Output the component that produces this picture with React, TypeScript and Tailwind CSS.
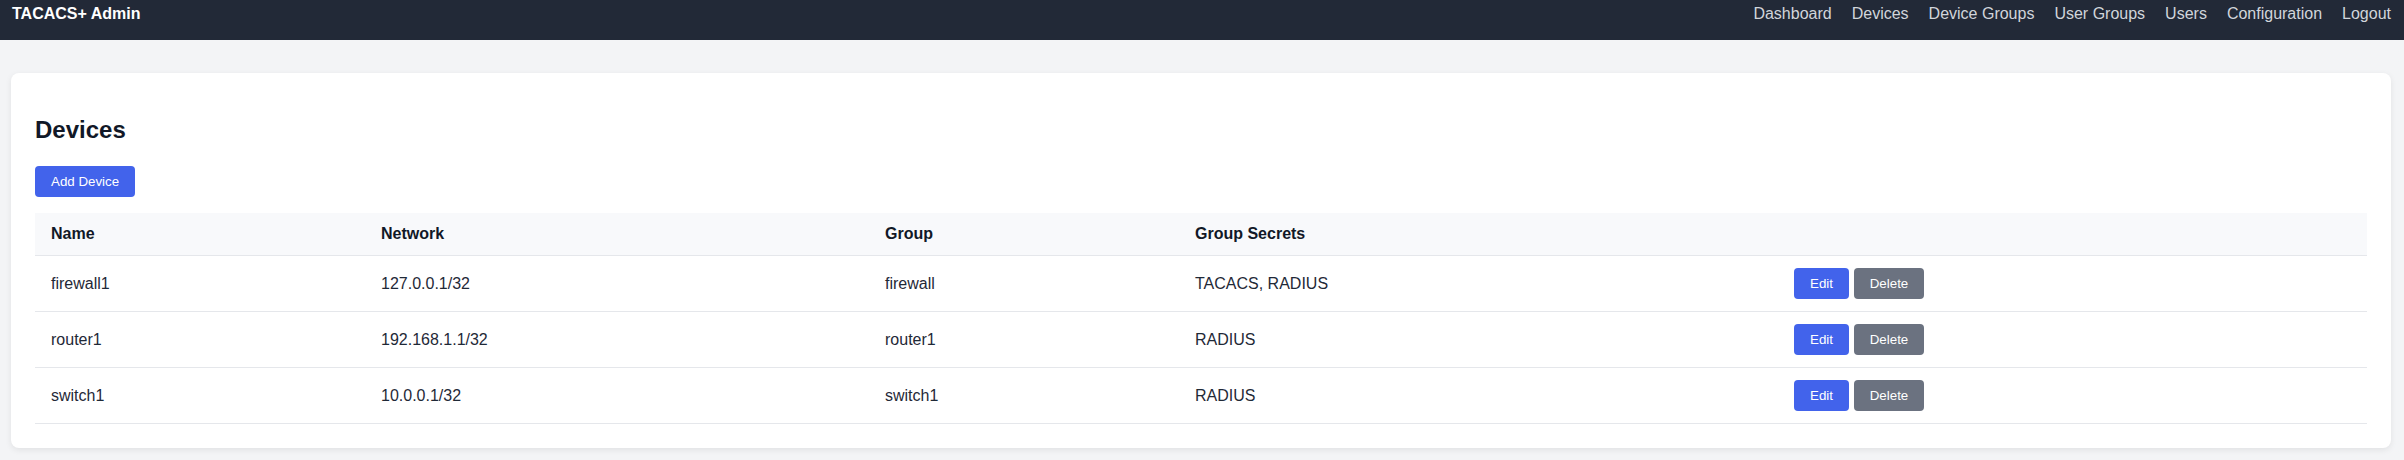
import React from "react";

const navLinks = ["Dashboard", "Devices", "Device Groups", "User Groups", "Users", "Configuration", "Logout"];

const devices = [
  { name: "firewall1", network: "127.0.0.1/32", group: "firewall", secrets: "TACACS, RADIUS" },
  { name: "router1", network: "192.168.1.1/32", group: "router1", secrets: "RADIUS" },
  { name: "switch1", network: "10.0.0.1/32", group: "switch1", secrets: "RADIUS" },
];

export default function App() {
  return (
    <div
      className="min-h-[460px] bg-[#f3f4f6] text-[#1f2937]"
      style={{ fontFamily: '"Liberation Sans", Arial, Helvetica, sans-serif' }}
    >
      <nav className="flex h-10 items-start justify-between bg-[#222937] pl-3 pr-[13px] pt-[5px] text-base leading-[18px]">
        <div className="font-bold text-white">TACACS+ Admin</div>
        <div className="flex gap-5 text-[#d1d5db]">
          {navLinks.map((l) => (
            <a key={l} href="#" className="hover:text-white">
              {l}
            </a>
          ))}
        </div>
      </nav>

      <main className="pl-[11px] pr-[13px] pt-[33px] pb-[13px]">
        <div className="rounded-lg bg-white p-6 shadow-[0_2px_6px_rgba(0,0,0,0.08)]">
          <h2 className="mt-[19px] mb-[22px] text-2xl leading-[28px] font-bold text-[#111827]">Devices</h2>
          <button className="mb-4 h-[31px] rounded bg-[#4263eb] px-4 text-[13.33px] text-white">Add Device</button>
          <table className="w-full border-collapse text-left text-base leading-[18px]">
            <thead>
              <tr className="bg-[#f8f9fb]">
                <th className="w-[330px] border-b border-[#e5e7eb] px-4 py-3 font-bold text-[#111827]">Name</th>
                <th className="w-[504px] border-b border-[#e5e7eb] px-4 py-3 font-bold text-[#111827]">Network</th>
                <th className="w-[310px] border-b border-[#e5e7eb] px-4 py-3 font-bold text-[#111827]">Group</th>
                <th className="w-[599px] border-b border-[#e5e7eb] px-4 py-3 font-bold text-[#111827]">Group Secrets</th>
                <th className="border-b border-[#e5e7eb] px-4 py-3"></th>
              </tr>
            </thead>
            <tbody>
              {devices.map((d) => (
                <tr key={d.name}>
                  <td className="border-b border-[#e5e7eb] px-4 py-3 align-middle">{d.name}</td>
                  <td className="border-b border-[#e5e7eb] px-4 py-3 align-middle">{d.network}</td>
                  <td className="border-b border-[#e5e7eb] px-4 py-3 align-middle">{d.group}</td>
                  <td className="border-b border-[#e5e7eb] px-4 py-3 align-middle">{d.secrets}</td>
                  <td className="border-b border-[#e5e7eb] px-4 py-3 align-middle">
                    <div className="flex gap-[5px]">
                      <button className="h-[31px] w-[55px] rounded bg-[#4263eb] text-[13.33px] text-white">Edit</button>
                      <button className="h-[31px] w-[70px] rounded bg-[#6b7280] text-[13.33px] text-white">Delete</button>
                    </div>
                  </td>
                </tr>
              ))}
            </tbody>
          </table>
        </div>
      </main>
    </div>
  );
}
